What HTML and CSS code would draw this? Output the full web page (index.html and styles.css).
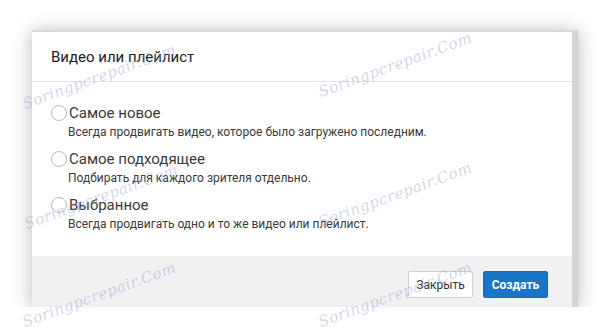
FILE: index.html
```html
<!DOCTYPE html>
<html>
<head>
    <meta charset="utf-8">
    <link rel="stylesheet" href="styles.css">
</head>
<body>
    <div class="dialog">
        <div class="dialog-head">Видео или плейлист</div>
        <div class="dialog-body">
            <label class="option">
                <span class="radio"></span>
                <span class="option-title">Самое новое</span>
            </label>
            <div class="option-desc">Всегда продвигать видео, которое было загружено последним.</div>
            <label class="option">
                <span class="radio"></span>
                <span class="option-title">Самое подходящее</span>
            </label>
            <div class="option-desc">Подбирать для каждого зрителя отдельно.</div>
            <label class="option">
                <span class="radio"></span>
                <span class="option-title">Выбранное</span>
            </label>
            <div class="option-desc">Всегда продвигать одно и то же видео или плейлист.</div>
        </div>
        <div class="dialog-foot">
            <button class="btn btn-close">Закрыть</button>
            <button class="btn btn-create">Создать</button>
        </div>
    </div>

    <!-- watermark -->
    <div class="wm wm1">Soringpcrepair.Com</div>
    <div class="wm wm2">Soringpcrepair.Com</div>
    <div class="wm wm3">Soringpcrepair.Com</div>
    <div class="wm wm4">Soringpcrepair.Com</div>
    <div class="wm wm5">Soringpcrepair.Com</div>
    <div class="wm wm6">Soringpcrepair.Com</div>
</body>
</html>
```
FILE: styles.css
```css
body{
    margin: 0;
    background: #fff;
    font-family: Roboto, "Liberation Sans", sans-serif;
    color: #333;
}
.dialog{
    margin: 30px 0 0 32px;
    width: 540px;
    background: #fff;
    border-top: 2px solid #d9d9d9;
    border-right: 6px solid #d4d4d4;
    box-shadow: 0 2px 18px rgba(0,0,0,0.28);
}
.dialog-head{
    height: 49px;
    padding-left: 19px;
    display: flex;
    align-items: center;
    font-size: 15px;
    color: #222;
    border-bottom: 1px solid #e2e2e2;
}
.dialog-body{
    padding: 21px 19px 23px 19px;
}
.option{
    display: flex;
    align-items: center;
    height: 20px;
}
.option + .option-desc + .option{
    margin-top: 8px;
}
.radio{
    width: 14px;
    height: 14px;
    border: 1px solid #b8b8b8;
    border-radius: 50%;
    margin-right: 2px;
    flex-shrink: 0;
}
.option-title{
    font-size: 15px;
    color: #3a3a3a;
}
.option-desc{
    padding-left: 17px;
    height: 18px;
    line-height: 18px;
    font-size: 12px;
    color: #3a3a3a;
}
.dialog-foot{
    background: #f1f1f1;
    display: flex;
    justify-content: flex-end;
    gap: 10px;
    padding: 15px 24px 9px 0;
}
.btn{
    width: 65px;
    height: 27px;
    font-family: Roboto, "Liberation Sans", sans-serif;
    font-size: 12px;
    border-radius: 2px;
    padding: 0;
}
.btn-close{
    background: #fff;
    border: 1px solid #cfcfcf;
    color: #333;
}
.btn-create{
    background: #1a74c8;
    border: 1px solid #1a6cbc;
    color: #fff;
    font-weight: bold;
}
.wm{
    position: absolute;
    width: 200px;
    font-family: "DejaVu Serif", serif;
    font-style: italic;
    font-size: 15px;
    letter-spacing: 0.5px;
    color: rgba(150,162,210,0.45);
    transform: rotate(-20deg);
    transform-origin: 0 0;
    pointer-events: none;
}
.wm1{ left: 20px;  top: 96px; }
.wm2{ left: 316px; top: 84px; }
.wm3{ left: 22px;  top: 216px; }
.wm4{ left: 316px; top: 214px; }
.wm5{ left: 20px;  top: 314px; }
.wm6{ left: 316px; top: 314px; }
```
